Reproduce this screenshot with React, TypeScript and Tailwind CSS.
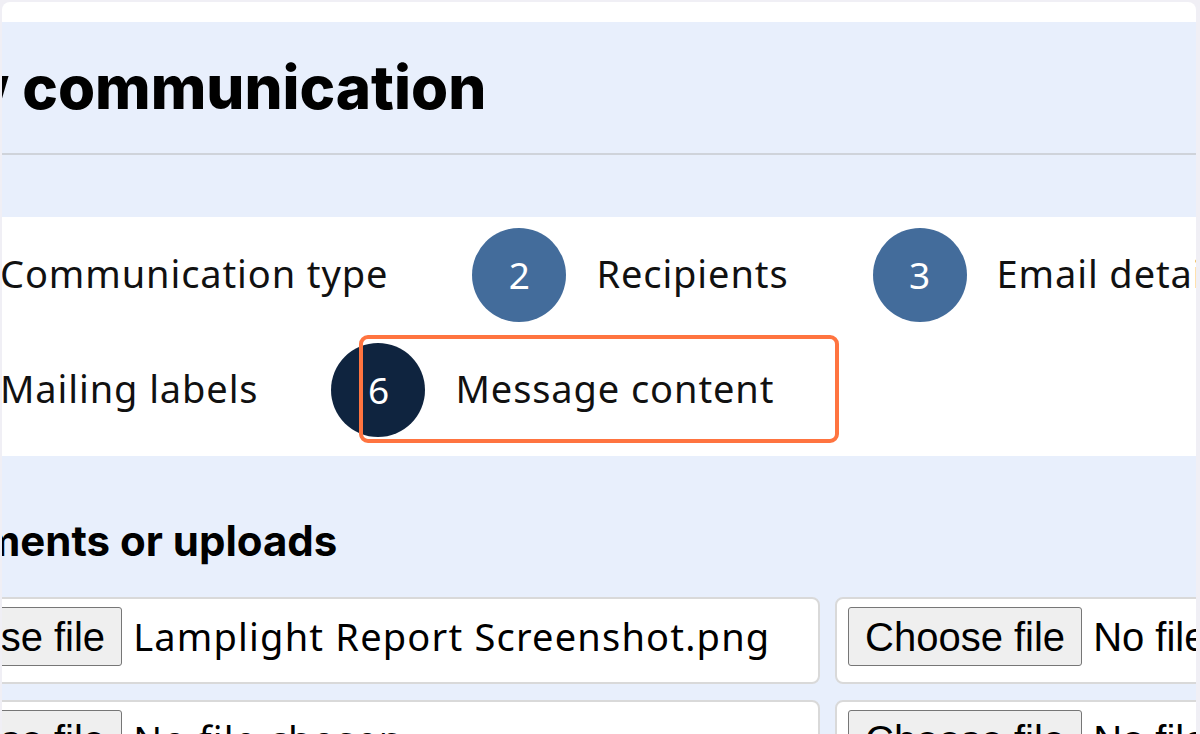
import React from "react";

const steps1 = [
  { n: 1, label: "Communication type" },
  { n: 2, label: "Recipients" },
  { n: 3, label: "Email details" },
];

const steps2 = [
  { n: 5, label: "Mailing labels" },
  { n: 6, label: "Message content", current: true },
];

function Step({ n, label, current }: { n: number; label: string; current?: boolean }) {
  return (
    <div className="relative flex shrink-0 items-center gap-[30px]">
      <div
        className={
          "flex h-[94px] w-[94px] shrink-0 items-center justify-center rounded-full text-[37px] text-white " +
          (current ? "bg-[#0f243f]" : "bg-[#436c9b]")
        }
      >
        {n}
      </div>
      <span className="-mt-[3px] whitespace-nowrap text-[38px] tracking-[0.9px] text-[#111]">{label}</span>
      {current && (
        <div className="absolute left-[28px] top-[-8px] h-[108px] w-[480px] rounded-[9px] border-4 border-[#ff7440]" />
      )}
    </div>
  );
}

function FileCard({ file, chooser }: { file?: string; chooser?: boolean }) {
  return (
    <div className="flex h-[87px] w-[945px] shrink-0 items-start gap-[11px] rounded-[8px] border-2 border-[#d9d9d9] bg-white px-[11px] pt-[8px]">
      <div className="flex h-[59px] shrink-0 items-center rounded-[3px] border border-[#767676] bg-[#efefef] px-[16px] font-['Liberation_Sans',Arial,sans-serif] text-[40px] text-black">
        Choose file
      </div>
      <span
        className={
          "flex h-[59px] items-center whitespace-nowrap text-black " +
          (chooser
            ? "font-['Liberation_Sans',Arial,sans-serif] text-[40px]"
            : "text-[38px] tracking-[1.2px]")
        }
      >
        {file ?? "No file chosen"}
      </span>
    </div>
  );
}

export default function App() {
  return (
    <div className="h-[734px] w-[1200px] overflow-hidden bg-[#f0eff5] pl-[2px] pr-[4px] pt-[2px] font-['Noto_Sans',sans-serif]">
      <div className="h-full overflow-hidden rounded-t-[8px] bg-white pt-[20px]">
        <div className="h-full bg-[#e8effc]">
          <div className="flex h-[133px] items-center border-b-2 border-[#cfd3da] pb-[2px]">
            <h1 className="-ml-[126px] whitespace-nowrap font-['Inter',sans-serif] text-[60px] font-extrabold text-black">
              New communication
            </h1>
          </div>
          <div className="h-[62px]" />
          <div className="flex h-[239px] flex-col gap-[21px] overflow-hidden bg-white pt-[11px]">
            <div className="-ml-[126px] flex gap-[84px]">
              {steps1.map((s) => (
                <Step key={s.n} {...s} />
              ))}
            </div>
            <div className="-ml-[126px] flex gap-[73px]">
              {steps2.map((s) => (
                <Step key={s.n} {...s} />
              ))}
            </div>
          </div>
          <div className="flex h-[141px] items-center pt-[28px]">
            <h2 className="-ml-[155px] whitespace-nowrap font-['Inter',sans-serif] text-[42px] font-bold text-black">
              Attachments or uploads
            </h2>
          </div>
          <div className="-ml-[127px] flex flex-col gap-[16px]">
            <div className="flex gap-[15px]">
              <FileCard file="Lamplight Report Screenshot.png" />
              <FileCard chooser />
            </div>
            <div className="flex gap-[15px]">
              <FileCard />
              <FileCard chooser />
            </div>
          </div>
        </div>
      </div>
    </div>
  );
}
